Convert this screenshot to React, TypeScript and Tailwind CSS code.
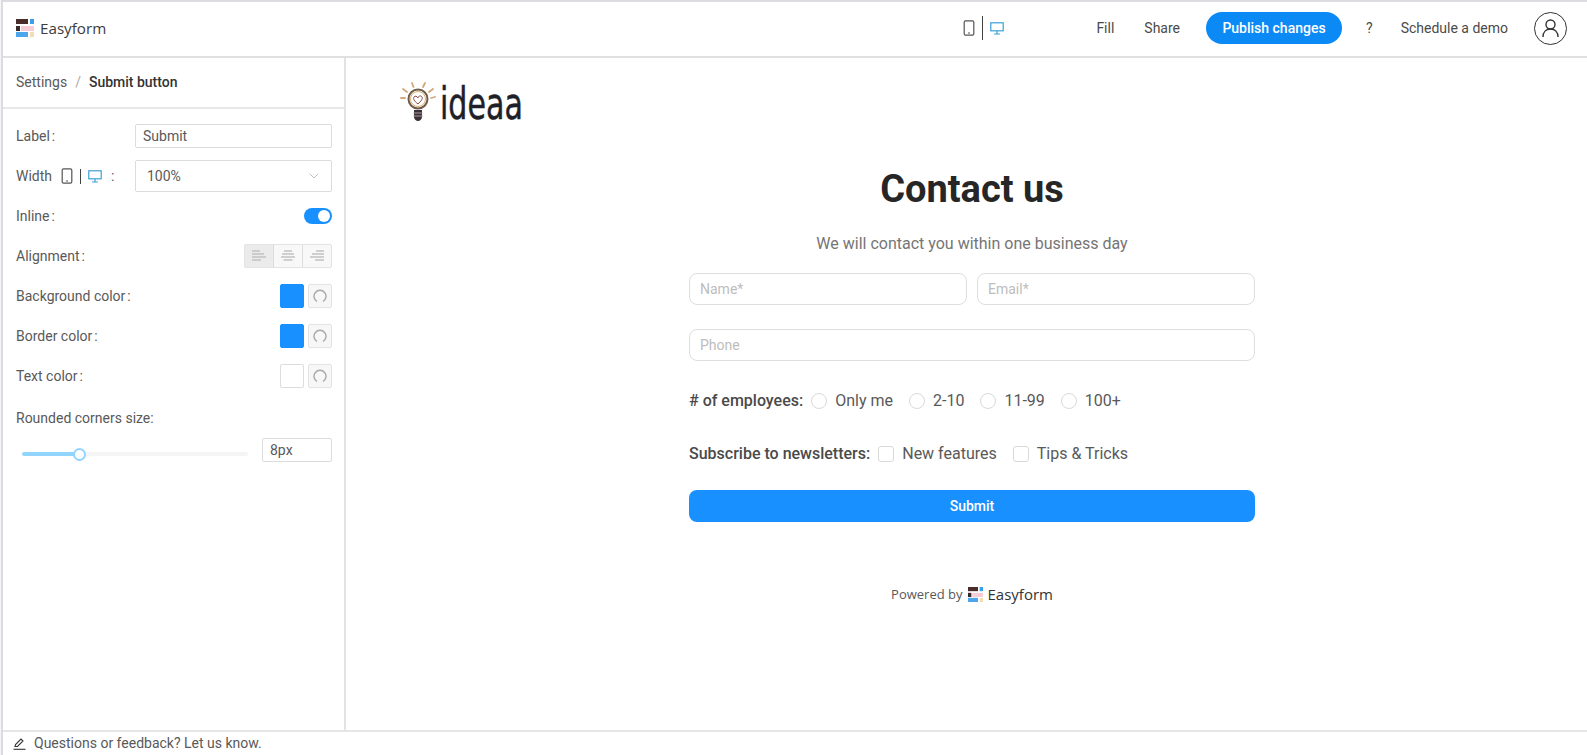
import React from 'react';
import { ChevronDown } from 'lucide-react';

const Logo = ({ size }: { size: number }) => (
  <svg width={size} height={size} viewBox="0 0 18 18" className="shrink-0">
    <rect x="0" y="0" width="12" height="5" fill="#4a2c2a" />
    <rect x="14" y="0" width="4" height="5" fill="#3ba0ea" />
    <rect x="0" y="7" width="4" height="5" fill="#3a2a2a" />
    <rect x="5" y="7" width="13" height="5" fill="#f6cdd6" />
    <rect x="0" y="13" width="12" height="5" fill="#4da6ec" />
    <rect x="14" y="13" width="4" height="5" fill="#f5dcb8" />
  </svg>
);

const Phone = () => (
  <svg width="12" height="16" viewBox="0 0 12 16" fill="none" stroke="#555" strokeWidth="1.2">
    <rect x="1.2" y="0.8" width="9.6" height="14.4" rx="1.4" />
    <path d="M5 13h2" />
  </svg>
);

const Desktop = () => (
  <svg width="14" height="13" viewBox="0 0 14 13" fill="none" stroke="#3ba0d8" strokeWidth="1.2">
    <rect x="0.8" y="0.8" width="12.4" height="8" />
    <path d="M7 9v2.5M4 12h6" />
  </svg>
);

const Reset = () => (
  <div className="w-[24px] h-[24px] flex items-center justify-center border border-[#e3e3e3] bg-[#f7f7f7] rounded-[2px]">
    <svg width="14" height="14" viewBox="0 0 14 14" fill="none" stroke="#a8a8a8" strokeWidth="1.4">
      <path d="M4 12.5 A6 6 0 1 1 10 12.5" />
    </svg>
  </div>
);

const AlignIcon = ({ widths, side }: { widths: number[]; side: 'l' | 'c' | 'r' }) => (
  <svg width="14" height="13" viewBox="0 0 14 13" stroke="#c2c2c2" strokeWidth="1.5">
    {widths.map((w, i) => {
      const x = side === 'l' ? 0 : side === 'c' ? (14 - w) / 2 : 14 - w;
      return <path key={i} d={`M${x} ${i * 3 + 1}h${w}`} />;
    })}
  </svg>
);

const Label = ({ text }: { text: string }) => (
  <span className="text-[14px] text-[#595959]">
    {text}
    <span className="ml-[2px]">:</span>
  </span>
);

const ColorRow = ({ text, color }: { text: string; color: string }) => (
  <div className="flex items-center justify-between h-[24px] mb-[16px]">
    <Label text={text} />
    <div className="flex items-center gap-[4px]">
      <div className={`w-[24px] h-[24px] rounded-[2px] border ${color}`} />
      <Reset />
    </div>
  </div>
);

const Sidebar = () => (
  <aside className="w-[343px] shrink-0 border-r-2 border-[#e2e2e4] flex flex-col">
    <div className="h-[51px] shrink-0 border-b-2 border-[#e8e8e8] flex items-center px-[13px] text-[14px]">
      <span className="text-[#595959]">Settings</span>
      <span className="text-[#aaaaaa] mx-[8px]">/</span>
      <span className="text-[#333333] font-medium">Submit button</span>
    </div>
    <div className="pl-[13px] pr-[12px] pt-[15px]">
      <div className="flex items-center justify-between h-[24px] mb-[12px]">
        <Label text="Label" />
        <div className="w-[197px] h-[24px] border border-[#dcdcdc] rounded-[2px] px-[7px] flex items-center text-[14px] text-[#595959]">
          Submit
        </div>
      </div>
      <div className="flex items-center justify-between h-[32px] mb-[12px]">
        <div className="flex items-center text-[14px] text-[#595959]">
          <span className="mr-[9px]">Width</span>
          <Phone />
          <span className="w-px h-[15px] bg-[#444] mx-[7px]" />
          <Desktop />
          <span className="ml-[9px]">:</span>
        </div>
        <div className="w-[197px] h-[32px] border border-[#dcdcdc] rounded-[2px] pl-[11px] pr-[9px] flex items-center justify-between text-[14px] text-[#595959]">
          100%
          <ChevronDown size={16} strokeWidth={1} color="#a0a0a0" />
        </div>
      </div>
      <div className="flex items-center justify-between h-[24px] mb-[16px]">
        <Label text="Inline" />
        <div className="w-[28px] h-[16px] rounded-full bg-[#1890ff] flex items-center justify-end pr-[2px]">
          <div className="w-[12px] h-[12px] rounded-full bg-white" />
        </div>
      </div>
      <div className="flex items-center justify-between h-[24px] mb-[16px]">
        <Label text="Alignment" />
        <div className="flex w-[88px] h-[24px] border border-[#e3e3e3] rounded-[2px] bg-[#f8f8f8]">
          <div className="flex-1 flex items-center justify-center bg-[#ebebeb] border-r border-[#dddddd]">
            <AlignIcon side="l" widths={[8, 12, 14, 9]} />
          </div>
          <div className="flex-1 flex items-center justify-center border-r border-[#dddddd]">
            <AlignIcon side="c" widths={[8, 12, 14, 9]} />
          </div>
          <div className="flex-1 flex items-center justify-center">
            <AlignIcon side="r" widths={[8, 12, 14, 9]} />
          </div>
        </div>
      </div>
      <ColorRow text="Background color" color="bg-[#1890ff] border-[#1890ff]" />
      <ColorRow text="Border color" color="bg-[#1890ff] border-[#1890ff]" />
      <ColorRow text="Text color" color="bg-white border-[#dcdcdc]" />
      <div className="text-[14px] text-[#595959] mt-[20px] mb-[9px]">Rounded corners size:</div>
      <div className="flex items-start">
        <div className="relative ml-[6px] mt-[14px] w-[226px] h-[4px] rounded-full bg-[#f5f5f5]">
          <div className="w-[57px] h-[4px] rounded-full bg-[#91d5ff]" />
          <div className="absolute left-[51px] top-[-4px] w-[13px] h-[13px] rounded-full bg-white border-2 border-[#91d5ff]" />
        </div>
        <div className="ml-auto w-[70px] h-[24px] border border-[#dcdcdc] rounded-[2px] px-[7px] flex items-center text-[14px] text-[#595959]">
          8px
        </div>
      </div>
    </div>
  </aside>
);

const Bulb = () => (
  <svg width="38" height="44" viewBox="0 0 38 44" fill="none" className="shrink-0">
    <g stroke="#d2a878" strokeWidth="1.8" strokeLinecap="round">
      <path d="M1 16h4M3 7l4 3M12 1l1.5 4M25 1l-2 4M33 7l-4 3M35 15l-4 1" />
    </g>
    <circle cx="18" cy="17" r="9.5" stroke="#6e5a48" strokeWidth="2" />
    <circle cx="18" cy="17" r="7.5" stroke="#d9b070" strokeWidth="1" />
    <path d="M18 22c-4-3-5-5-4-7 1-1.5 3-1 4 1 0-2 3-3 4-1 1 2-1 4-4 7z" stroke="#8a4a4a" strokeWidth="1" />
    <path d="M14 28h8v7c0 2-2 4-4 4s-4-2-4-4z" fill="#3a3038" />
    <path d="M13 31h10M13 34h10" stroke="#c8b8b8" strokeWidth="0.8" />
  </svg>
);

const Field = ({ text, className }: { text: string; className?: string }) => (
  <div className={`h-[32px] border border-[#dedede] rounded-[8px] px-[10px] flex items-center text-[14px] text-[#bdbdbd] ${className ?? ''}`}>
    {text}
  </div>
);

const Option = ({ text, round }: { text: string; round?: boolean }) => (
  <div className="flex items-center text-[16px] text-[#595959]">
    <span className={`w-[16px] h-[16px] border border-[#d9d9d9] mr-[8px] ${round ? 'rounded-full' : 'rounded-[3px]'}`} />
    {text}
  </div>
);

const Form = () => (
  <main className="flex-1 min-w-0 flex flex-col">
    <div className="flex items-center pl-[54px] pt-[22px] h-[70px] shrink-0">
      <Bulb />
      <span className="text-[44px] leading-none text-[#1f1f28] [-webkit-text-stroke:0.5px_#1f1f28] font-['DejaVu_Sans_Condensed','DejaVu_Sans',sans-serif] scale-x-[0.76] origin-left ml-[2px]">
        ideaa
      </span>
    </div>
    <div className="w-[566px] ml-[343px] mt-[39px] flex flex-col">
      <h1 className="text-[38px] leading-[44px] font-bold text-[#262626] text-center">Contact us</h1>
      <p className="text-[16px] leading-[24px] text-[#757575] text-center mt-[21px]">
        We will contact you within one business day
      </p>
      <div className="flex gap-[10px] mt-[17px]">
        <Field text="Name*" className="flex-1" />
        <Field text="Email*" className="flex-1" />
      </div>
      <Field text="Phone" className="mt-[24px]" />
      <div className="flex items-center mt-[28px] h-[24px]">
        <span className="text-[16px] font-medium text-[#4a4a4a] mr-[8px]">
          # of employees:
        </span>
        <div className="flex gap-[16px]">
          <Option text="Only me" round />
          <Option text="2-10" round />
          <Option text="11-99" round />
          <Option text="100+" round />
        </div>
      </div>
      <div className="flex items-center mt-[29px] h-[24px]">
        <span className="text-[16px] font-medium text-[#4a4a4a] mr-[8px]">
          Subscribe to newsletters:
        </span>
        <div className="flex gap-[16px]">
          <Option text="New features" />
          <Option text="Tips & Tricks" />
        </div>
      </div>
      <div className="mt-[24px] h-[32px] rounded-[8px] bg-[#1890ff] flex items-center justify-center text-[14px] font-medium text-white">
        Submit
      </div>
      <div className="mt-[61px] flex items-center justify-center gap-[5px] text-[13px] text-[#595959] font-['Open_Sans',sans-serif]">
        Powered by
        <Logo size={15} />
        <span className="text-[15px] font-medium text-[#333333]">Easyform</span>
      </div>
    </div>
  </main>
);

export default function App() {
  return (
    <div className="h-screen w-full overflow-hidden flex bg-[#f5f5f7] pl-px">
      <div className="flex-1 min-w-0 flex flex-col bg-white border-l-2 border-t-2 border-[#dcdce0] font-['Roboto',sans-serif]">
        <header className="h-[56px] shrink-0 border-b-2 border-[#e0e0e0] flex items-center pl-[13px] pr-[20px] pb-[2px] text-[14px] text-[#4a4a4a]">
          <Logo size={18} />
          <span className="ml-[6px] text-[15.2px] font-medium text-[#3c3c3c] font-['Open_Sans',sans-serif]">Easyform</span>
          <div className="ml-auto flex items-center">
            <Phone />
            <span className="w-px h-[24px] bg-[#444] mx-[7px]" />
            <Desktop />
          </div>
          <span className="ml-[92px]">Fill</span>
          <span className="ml-[30px]">Share</span>
          <div className="ml-[26px] w-[136px] h-[32px] rounded-full bg-[#0b8af5] text-white font-medium flex items-center justify-center">
            Publish changes
          </div>
          <span className="ml-[24px]">?</span>
          <span className="ml-[28px]">Schedule a demo</span>
          <div className="ml-[26px] w-[33px] h-[33px] rounded-full border border-[#333] flex items-center justify-center">
            <svg width="17" height="19" viewBox="0 0 17 19" fill="none" stroke="#333" strokeWidth="1.4">
              <circle cx="8.5" cy="5.5" r="4.5" />
              <path d="M1 18c0-5 3-8 7.5-8s7.5 3 7.5 8" />
            </svg>
          </div>
        </header>
        <div className="flex-1 min-h-0 flex">
          <Sidebar />
          <Form />
        </div>
        <footer className="h-[25px] shrink-0 border-t-2 border-[#e6e6e6] flex items-center pl-[10px] text-[14px] text-[#595959]">
          <svg width="13" height="13" viewBox="0 0 13 13" fill="none" stroke="#333" strokeWidth="1.1" className="mr-[8px]">
            <path d="M2 9.5 2.5 7.5 8 2l2 2-5.5 5.5z" />
            <path d="M0.5 12.3h12" />
          </svg>
          Questions or feedback? Let us know.
        </footer>
      </div>
    </div>
  );
}
